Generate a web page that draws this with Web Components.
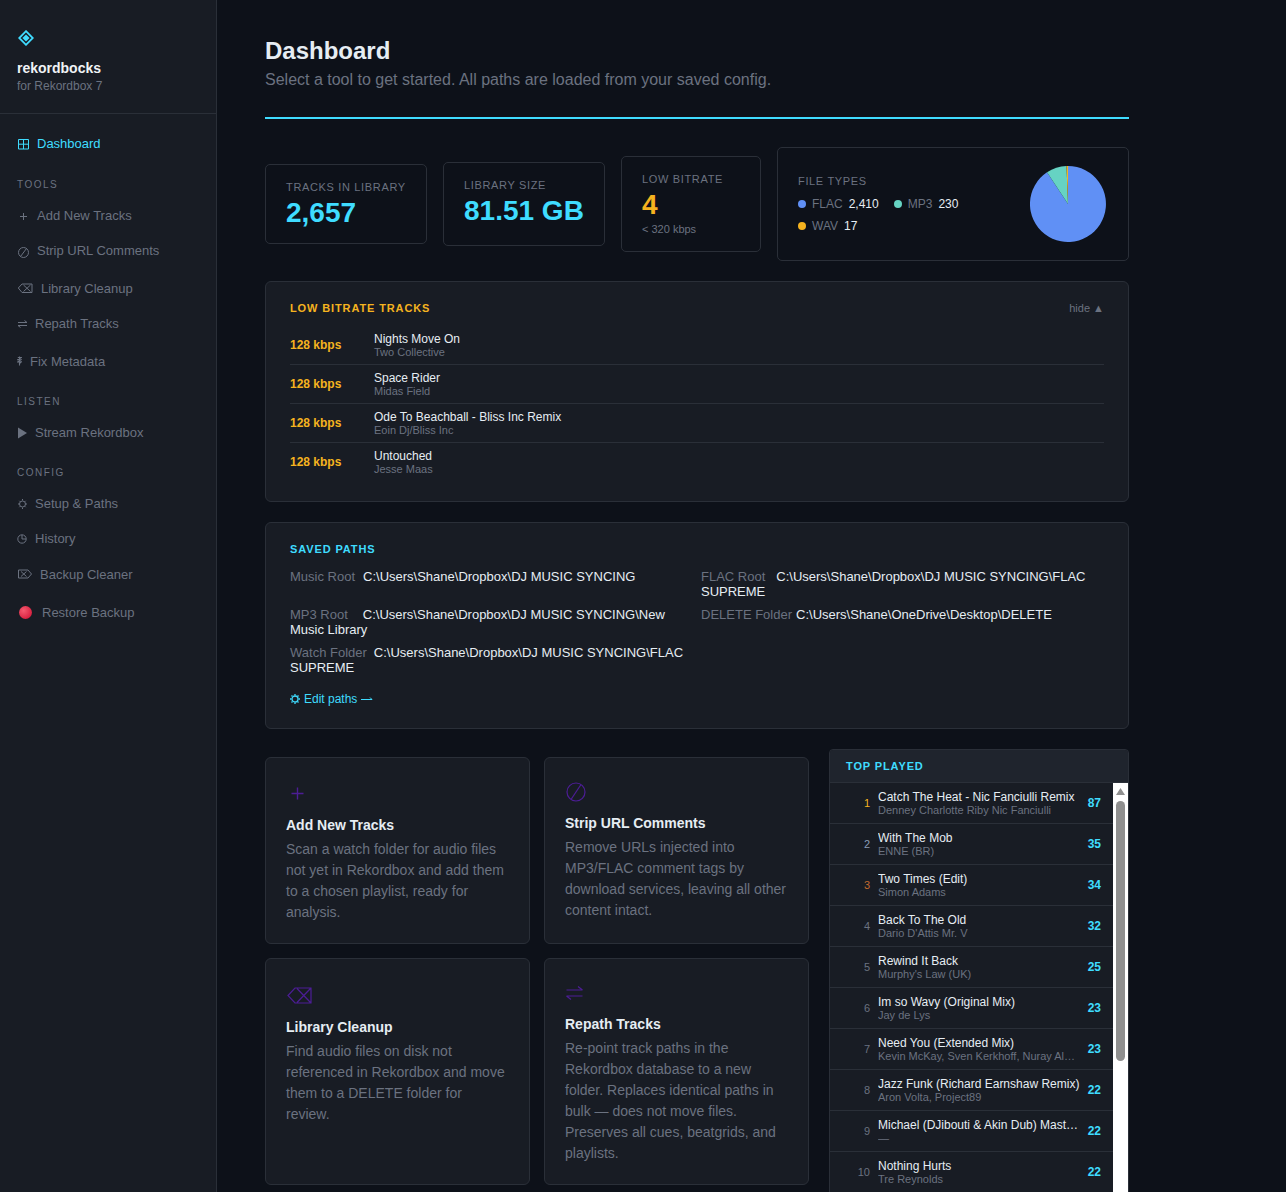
<!DOCTYPE html>
<html>
<head>
<meta charset="utf-8">
<title>rekordbocks</title>
<style>
    html, body { margin: 0; padding: 0; height: 100%; overflow: hidden; background: #0d1119; }
    body { font-family: "Liberation Sans", Arial, sans-serif; color: #e6edf3; }
    svg { display: block; flex: none; }
</style>
</head>
<body>
<rb-app>
    <rb-sidebar slot="sidebar">
        <rb-nav-item active h="35">
            <svg slot="icon" width="12" height="12" viewBox="0 0 12 12" fill="none" stroke="#3fdcff"><path d="M1.5 1.5h10v9.5h-10zM6.5 1.5v9.5M1.5 6.2h10"/></svg>
            Dashboard
        </rb-nav-item>
        <rb-nav-heading top="17">Tools</rb-nav-heading>
        <rb-nav-item h="35">
            <svg slot="icon" width="12" height="12" viewBox="0 0 12 12" fill="none" stroke="#6b7280"><path d="M6.5 3v7M3 6.5h7"/></svg>
            Add New Tracks
        </rb-nav-item>
        <rb-nav-item h="35">
            <svg slot="icon" width="12" height="12" viewBox="0 0 12 12" fill="none" stroke="#6b7280" style="margin-top:2px"><circle cx="6.5" cy="6.5" r="5"/><path d="M3.5 10.5l6-8"/></svg>
            Strip URL Comments
        </rb-nav-item>
        <rb-nav-item h="38" shift>
            <svg slot="icon" width="16" height="10" viewBox="0 0 16 10" fill="none" stroke="#6b7280"><path d="M1.3 5L5 1h10v8.5H5zM6.5 2l7 6.5M13.5 2l-7 6.5"/></svg>
            Library Cleanup
        </rb-nav-item>
        <rb-nav-item h="35">
            <svg slot="icon" width="10" height="10" viewBox="0 0 10 10" fill="none" stroke="#6b7280"><path d="M1 3.5h9M7.5 1.5l2.500 2M10 6.500H1M3.500 8.500l-2.500-2"/></svg>
            Repath Tracks
        </rb-nav-item>
        <rb-nav-item h="38" shift>
            <svg slot="icon" width="5" height="10" viewBox="0 0 5 10" fill="none" stroke="#6b7280" stroke-width="1.100"><path d="M2.500 .5v9M.8 1.500h3.400l-3.400 2.200h3.400l-3.400 2.200h3.400l-2 2"/></svg>
            Fix Metadata
        </rb-nav-item>
        <rb-nav-heading top="16">Listen</rb-nav-heading>
        <rb-nav-item h="35">
            <svg slot="icon" width="10" height="12" viewBox="0 0 10 12" fill="#6b7280"><path d="M1 .500L10 6 1 11.500z"/></svg>
            Stream Rekordbox
        </rb-nav-item>
        <rb-nav-heading top="16">Config</rb-nav-heading>
        <rb-nav-item h="35">
            <svg slot="icon" width="10" height="10" viewBox="0 0 10 10" fill="none" stroke="#6b7280"><circle cx="5.500" cy="5" r="3"/><path d="M5.500 0v1.500M5.500 8.500V10M1 5H2.200M8.800 5H10M2.300 1.800l1 1M7.700 7.200l1 1M8.700 1.800l-1 1M3.300 7.200l-1 1"/></svg>
            Setup &amp; Paths
        </rb-nav-item>
        <rb-nav-item h="35">
            <svg slot="icon" width="10" height="10" viewBox="0 0 10 10" fill="none" stroke="#6b7280"><circle cx="5" cy="5" r="4.200"/><path d="M5 1v4h4"/></svg>
            History
        </rb-nav-item>
        <rb-nav-item h="36">
            <svg slot="icon" width="15" height="10" viewBox="0 0 15 10" fill="none" stroke="#6b7280"><path d="M1.500 1H11l3.500 4-3.500 4H1.500zM4 2.500l5.500 5M9.500 2.500L4 7.500"/></svg>
            Backup Cleaner
        </rb-nav-item>
        <rb-nav-item h="40">
            <span slot="icon" style="display:block;width:13px;height:13px;margin:0 2px;border-radius:50%;background:radial-gradient(circle at 35% 35%,#f4596f,#d92342 70%,#b81a36)"></span>
            Restore Backup
        </rb-nav-item>
    </rb-sidebar>

    <rb-page-head>
        <span slot="title">Dashboard</span>
        Select a tool to get started. All paths are loaded from your saved config.
    </rb-page-head>

    <rb-stats>
        <rb-stat-card pad="14">
            <span slot="label">Tracks in Library</span>
            <span slot="value">2,657</span>
        </rb-stat-card>
        <rb-stat-card pad="18">
            <span slot="label">Library Size</span>
            <span slot="value">81.51 GB</span>
        </rb-stat-card>
        <rb-stat-card pad="15" width="140" tone="amber">
            <span slot="label">Low Bitrate</span>
            <span slot="value">4</span>
            <span slot="sub">&lt; 320 kbps</span>
        </rb-stat-card>
        <rb-file-types>
            <rb-legend-item color="#6090f5" value="2,410">FLAC</rb-legend-item>
            <rb-legend-item color="#66d3c3" value="230">MP3</rb-legend-item>
            <rb-legend-item color="#f5b31f" value="17">WAV</rb-legend-item>
        </rb-file-types>
    </rb-stats>

    <rb-panel tone="amber" action="hide ▲" heading="Low Bitrate Tracks">
        <rb-low-row kbps="128 kbps" artist="Two Collective">Nights Move On</rb-low-row>
        <rb-low-row kbps="128 kbps" artist="Midas Field">Space Rider</rb-low-row>
        <rb-low-row kbps="128 kbps" artist="Eoin Dj/Bliss Inc">Ode To Beachball - Bliss Inc Remix</rb-low-row>
        <rb-low-row kbps="128 kbps" artist="Jesse Maas" last>Untouched</rb-low-row>
    </rb-panel>

    <rb-panel tone="cyan" heading="Saved Paths">
        <rb-path-grid>
            <rb-path label="Music Root" gap="8">C:\Users\Shane\Dropbox\DJ MUSIC SYNCING</rb-path>
            <rb-path label="FLAC Root" gap="11">C:\Users\Shane\Dropbox\DJ MUSIC SYNCING\FLAC<br>SUPREME</rb-path>
            <rb-path label="MP3 Root" gap="15">C:\Users\Shane\Dropbox\DJ MUSIC SYNCING\New<br>Music Library</rb-path>
            <rb-path label="DELETE Folder" gap="4">C:\Users\Shane\OneDrive\Desktop\DELETE</rb-path>
            <rb-path label="Watch Folder" gap="7">C:\Users\Shane\Dropbox\DJ MUSIC SYNCING\FLAC<br>SUPREME</rb-path>
        </rb-path-grid>
        <rb-edit-link>Edit paths</rb-edit-link>
    </rb-panel>

    <rb-lower>
        <rb-tool-grid>
            <rb-tool-card icon-height="39">
                <svg slot="icon" width="13" height="13" viewBox="0 0 13 13" fill="none" stroke="#4c1d95" stroke-width="1.400" style="margin:9px 0 0 5px"><path d="M6.500 .500v12M.500 6.500h12"/></svg>
                <span slot="title">Add New Tracks</span>
                Scan a watch folder for audio files not yet in Rekordbox and add them to a chosen playlist, ready for analysis.
            </rb-tool-card>
            <rb-tool-card icon-height="37">
                <svg slot="icon" width="20" height="20" viewBox="0 0 20 20" fill="none" stroke="#4c1d95" stroke-width="1.200" style="margin:4px 0 0 1px"><circle cx="10" cy="10" r="9"/><path d="M5 17.500L15 2.500"/></svg>
                <span slot="title">Strip URL Comments</span>
                Remove URLs injected into MP3/FLAC comment tags by download services, leaving all other content intact.
            </rb-tool-card>
            <rb-tool-card icon-height="40">
                <svg slot="icon" width="25" height="17" viewBox="0 0 25 17" fill="none" stroke="#4c1d95" stroke-width="1.200" style="margin:8px 0 0 1px"><path d="M1 8.500L8 1h16v15H8zM10 1.500l13.500 14M23.500 1.500L10 15.500"/></svg>
                <span slot="title">Library Cleanup</span>
                Find audio files on disk not referenced in Rekordbox and move them to a DELETE folder for review.
            </rb-tool-card>
            <rb-tool-card icon-height="37">
                <svg slot="icon" width="17" height="16" viewBox="0 0 17 16" fill="none" stroke="#4c1d95" stroke-width="1.200" style="margin:6px 0 0 1px"><path d="M.500 5h16M12 1.500l4.500 3.500M16.500 11H.500M5 14.500L.500 11"/></svg>
                <span slot="title">Repath Tracks</span>
                Re-point track paths in the Rekordbox database to a new folder. Replaces identical paths in bulk — does not move files. Preserves all cues, beatgrids, and playlists.
            </rb-tool-card>
        </rb-tool-grid>
        <rb-top-played>
            <rb-top-row rank="1" count="87" tone="#f5b31f"><span slot="title">Catch The Heat - Nic Fanciulli Remix</span><span slot="artist">Denney Charlotte Riby Nic Fanciulli</span></rb-top-row>
            <rb-top-row rank="2" count="35" tone="#8a9bb5"><span slot="title">With The Mob</span><span slot="artist">ENNE (BR)</span></rb-top-row>
            <rb-top-row rank="3" count="34" tone="#c2692e"><span slot="title">Two Times (Edit)</span><span slot="artist">Simon Adams</span></rb-top-row>
            <rb-top-row rank="4" count="32"><span slot="title">Back To The Old</span><span slot="artist">Dario D'Attis Mr. V</span></rb-top-row>
            <rb-top-row rank="5" count="25"><span slot="title">Rewind It Back</span><span slot="artist">Murphy's Law (UK)</span></rb-top-row>
            <rb-top-row rank="6" count="23"><span slot="title">Im so Wavy (Original Mix)</span><span slot="artist">Jay de Lys</span></rb-top-row>
            <rb-top-row rank="7" count="23"><span slot="title">Need You (Extended Mix)</span><span slot="artist">Kevin McKay, Sven Kerkhoff, Nuray Al…</span></rb-top-row>
            <rb-top-row rank="8" count="22"><span slot="title">Jazz Funk (Richard Earnshaw Remix)</span><span slot="artist">Aron Volta, Project89</span></rb-top-row>
            <rb-top-row rank="9" count="22"><span slot="title">Michael (DJibouti &amp; Akin Dub) Mast…</span><span slot="artist">—</span></rb-top-row>
            <rb-top-row rank="10" count="22"><span slot="title">Nothing Hurts</span><span slot="artist">Tre Reynolds</span></rb-top-row>
        </rb-top-played>
    </rb-lower>
</rb-app>

<script>
class RbApp extends HTMLElement {
    constructor() {
        super();
        this.attachShadow({ mode: 'open' });
        this.shadowRoot.innerHTML = `
            <style>
                :host { display: flex; height: 100vh; overflow: hidden; }
                main { flex: 1; min-width: 0; padding: 37px 48px 0; overflow: hidden; }
                .column { max-width: 864px; display: flex; flex-direction: column; gap: 20px; }
            </style>
            <slot name="sidebar"></slot>
            <main><div class="column"><slot></slot></div></main>
        `;
    }
}
customElements.define('rb-app', RbApp);

class RbSidebar extends HTMLElement {
    constructor() {
        super();
        this.attachShadow({ mode: 'open' });
        this.shadowRoot.innerHTML = `
            <style>
                :host { display: block; flex: none; width: 216px; background: #181c24; border-right: 1px solid #2a2f38; }
                header { height: 83px; padding: 30px 17px 0; border-bottom: 1px solid #2a2f38; }
                svg { display: block; margin-left: 1px; }
                .name { margin-top: 14px; font-size: 14px; line-height: 16px; font-weight: bold; color: #f0f3f6; }
                .sub { margin-top: 3px; font-size: 12px; line-height: 14px; color: #6b7280; }
                nav { padding: 12px 0 0 17px; display: flex; flex-direction: column; }
            </style>
            <header>
                <svg width="16" height="16" viewBox="0 0 16 16">
                    <path d="M8 1.200L14.800 8 8 14.800 1.200 8z" fill="none" stroke="#3fdcff" stroke-width="1.800"/>
                    <path d="M8 4.400L11.600 8 8 11.600 4.400 8z" fill="#3fdcff"/>
                </svg>
                <div class="name">rekordbocks</div>
                <div class="sub">for Rekordbox 7</div>
            </header>
            <nav><slot></slot></nav>
        `;
    }
}
customElements.define('rb-sidebar', RbSidebar);

class RbNavItem extends HTMLElement {
    constructor() {
        super();
        this.attachShadow({ mode: 'open' });
        this.shadowRoot.innerHTML = `
            <style>
                :host { display: flex; align-items: center; gap: 8px; box-sizing: border-box; font-size: 13px; color: #6b7280; }
                :host([active]) { color: #3fdcff; }
                :host([shift]) { padding-top: 2px; }
            </style>
            <slot name="icon"></slot>
            <span><slot></slot></span>
        `;
    }
    connectedCallback() {
        this.style.height = this.getAttribute('h') + 'px';
    }
}
customElements.define('rb-nav-item', RbNavItem);

class RbNavHeading extends HTMLElement {
    constructor() {
        super();
        this.attachShadow({ mode: 'open' });
        this.shadowRoot.innerHTML = `
            <style>
                :host { display: block; font-size: 10px; line-height: 14px; letter-spacing: 1.5px; text-transform: uppercase; color: #6b7280; margin-bottom: 6px; }
            </style>
            <slot></slot>
        `;
    }
    connectedCallback() {
        this.style.marginTop = this.getAttribute('top') + 'px';
    }
}
customElements.define('rb-nav-heading', RbNavHeading);

class RbPageHead extends HTMLElement {
    constructor() {
        super();
        this.attachShadow({ mode: 'open' });
        this.shadowRoot.innerHTML = `
            <style>
                :host { display: block; padding-bottom: 28px; border-bottom: 2px solid #3fdcff; margin-bottom: 8px; }
                h1 { margin: 0; font-size: 24px; line-height: 28px; font-weight: bold; color: #e6edf3; }
                p { margin: 6px 0 0; font-size: 16px; line-height: 18px; color: #6b7280; }
            </style>
            <h1><slot name="title"></slot></h1>
            <p><slot></slot></p>
        `;
    }
}
customElements.define('rb-page-head', RbPageHead);

class RbStats extends HTMLElement {
    constructor() {
        super();
        this.attachShadow({ mode: 'open' });
        this.shadowRoot.innerHTML = `
            <style>
                :host { display: flex; align-items: center; gap: 16px; }
            </style>
            <slot></slot>
        `;
    }
}
customElements.define('rb-stats', RbStats);

class RbStatCard extends HTMLElement {
    constructor() {
        super();
        this.attachShadow({ mode: 'open' });
        this.shadowRoot.innerHTML = `
            <style>
                :host { display: block; box-sizing: border-box; width: 162px; padding: 16px 20px; border: 1px solid #2a2f38; border-radius: 5px; }
                .label { font-size: 11px; line-height: 13px; letter-spacing: .66px; text-transform: uppercase; color: #6b7280; white-space: nowrap; }
                .value { margin-top: 3px; font-size: 28px; line-height: 32px; font-weight: bold; color: #3fdcff; }
                :host([tone=amber]) .value { color: #f5b31f; }
                .sub { font-size: 11px; line-height: 13px; color: #6b7280; margin-top: 2px; }
            </style>
            <div class="label"><slot name="label"></slot></div>
            <div class="value"><slot name="value"></slot></div>
            <div class="sub" hidden><slot name="sub"></slot></div>
        `;
    }
    connectedCallback() {
        if (this.getAttribute('width')) {
            this.style.width = this.getAttribute('width') + 'px';
        }
        this.style.paddingBottom = this.getAttribute('pad') + 'px';
        if (this.querySelector('[slot=sub]')) {
            this.shadowRoot.querySelector('.sub').hidden = false;
        }
    }
}
customElements.define('rb-stat-card', RbStatCard);

class RbFileTypes extends HTMLElement {
    constructor() {
        super();
        this.attachShadow({ mode: 'open' });
        this.shadowRoot.innerHTML = `
            <style>
                :host { flex: 1; display: flex; align-items: center; justify-content: space-between; padding: 18px 22px 18px 20px; border: 1px solid #2a2f38; border-radius: 5px; }
                .label { font-size: 11px; line-height: 13px; letter-spacing: .66px; text-transform: uppercase; color: #6b7280; margin-bottom: 9px; }
                .legend { display: flex; flex-wrap: wrap; gap: 8px 15px; width: 200px; }
                svg { display: block; }
            </style>
            <div>
                <div class="label">File Types</div>
                <div class="legend"><slot></slot></div>
            </div>
            <svg width="76" height="76" viewBox="0 0 76 76">
                <path d="M38 38L38 0A38 38 0 1 1 17 6.300z" fill="#6090f5"/>
                <path d="M38 38L17 6.300A38 38 0 0 1 36.500 .030z" fill="#66d3c3"/>
                <path d="M38 38L36.500 .030A38 38 0 0 1 38 0z" fill="#f5b31f"/>
            </svg>
        `;
    }
}
customElements.define('rb-file-types', RbFileTypes);

class RbLegendItem extends HTMLElement {
    constructor() {
        super();
        this.attachShadow({ mode: 'open' });
        this.shadowRoot.innerHTML = `
            <style>
                :host { display: flex; align-items: center; font-size: 12px; line-height: 14px; color: #6b7280; }
                i { width: 8px; height: 8px; border-radius: 50%; margin-right: 6px; }
                b { font-weight: normal; color: #e6edf3; margin-left: 6px; }
            </style>
            <i></i><slot></slot><b></b>
        `;
    }
    connectedCallback() {
        this.shadowRoot.querySelector('i').style.background = this.getAttribute('color');
        this.shadowRoot.querySelector('b').textContent = this.getAttribute('value');
    }
}
customElements.define('rb-legend-item', RbLegendItem);

class RbPanel extends HTMLElement {
    constructor() {
        super();
        this.attachShadow({ mode: 'open' });
        this.shadowRoot.innerHTML = `
            <style>
                :host { display: block; padding: 20px 24px; background: #181c24; border: 1px solid #2a2f38; border-radius: 6px; }
                .top { display: flex; justify-content: space-between; align-items: center; }
                h2 { margin: 0; font-size: 11px; line-height: 12px; font-weight: bold; letter-spacing: .88px; text-transform: uppercase; color: #3fdcff; }
                :host([tone=amber]) h2 { color: #f5b31f; }
                .action { font-size: 11px; color: #6b7280; }
                .body { margin-top: 12px; }
                :host([tone=cyan]) .body { margin-top: 14px; }
            </style>
            <div class="top"><h2></h2><span class="action"></span></div>
            <div class="body"><slot></slot></div>
        `;
    }
    connectedCallback() {
        this.shadowRoot.querySelector('h2').textContent = this.getAttribute('heading');
        this.shadowRoot.querySelector('.action').textContent = this.getAttribute('action') || '';
    }
}
customElements.define('rb-panel', RbPanel);

class RbLowRow extends HTMLElement {
    constructor() {
        super();
        this.attachShadow({ mode: 'open' });
        this.shadowRoot.innerHTML = `
            <style>
                :host { display: flex; align-items: center; padding: 6px 0; border-bottom: 1px solid #2a2f38; }
                :host([last]) { border-bottom: 0; }
                .kbps { width: 84px; font-size: 12px; font-weight: bold; color: #f5b31f; }
                .title { font-size: 12px; line-height: 14px; color: #e6edf3; }
                .artist { font-size: 11px; line-height: 12px; color: #6b7280; }
            </style>
            <div class="kbps"></div>
            <div>
                <div class="title"><slot></slot></div>
                <div class="artist"></div>
            </div>
        `;
    }
    connectedCallback() {
        this.shadowRoot.querySelector('.kbps').textContent = this.getAttribute('kbps');
        this.shadowRoot.querySelector('.artist').textContent = this.getAttribute('artist');
    }
}
customElements.define('rb-low-row', RbLowRow);

class RbPathGrid extends HTMLElement {
    constructor() {
        super();
        this.attachShadow({ mode: 'open' });
        this.shadowRoot.innerHTML = `
            <style>
                :host { display: grid; grid-template-columns: 403px 403px; gap: 8px; }
            </style>
            <slot></slot>
        `;
    }
}
customElements.define('rb-path-grid', RbPathGrid);

class RbPath extends HTMLElement {
    constructor() {
        super();
        this.attachShadow({ mode: 'open' });
        this.shadowRoot.innerHTML = `
            <style>
                :host { display: block; font-size: 13px; line-height: 15px; color: #e6edf3; }
                span { color: #6b7280; }
            </style>
            <span></span><slot></slot>
        `;
    }
    connectedCallback() {
        const label = this.shadowRoot.querySelector('span');
        label.textContent = this.getAttribute('label');
        label.style.marginRight = this.getAttribute('gap') + 'px';
    }
}
customElements.define('rb-path', RbPath);

class RbEditLink extends HTMLElement {
    constructor() {
        super();
        this.attachShadow({ mode: 'open' });
        this.shadowRoot.innerHTML = `
            <style>
                :host { display: flex; align-items: center; gap: 4px; margin: 17px 0 2px; font-size: 12px; line-height: 14px; color: #3fdcff; }
            </style>
            <svg width="10" height="10" viewBox="0 0 10 10" fill="none" stroke="#3fdcff" stroke-width="1.300"><circle cx="5" cy="5" r="3"/><path d="M5 0v1.500M5 8.500V10M0 5h1.500M8.500 5H10M1.500 1.500l1 1M7.500 7.500l1 1M8.500 1.500l-1 1M2.500 7.500l-1 1"/></svg>
            <span><slot></slot></span>
            <svg width="12" height="6" viewBox="0 0 12 6" fill="none" stroke="#3fdcff"><path d="M0 3.500h11M9 1.500l2 2"/></svg>
        `;
    }
}
customElements.define('rb-edit-link', RbEditLink);

class RbLower extends HTMLElement {
    constructor() {
        super();
        this.attachShadow({ mode: 'open' });
        this.shadowRoot.innerHTML = `
            <style>
                :host { display: grid; grid-template-columns: 544px 300px; gap: 20px; align-items: start; }
            </style>
            <slot></slot>
        `;
    }
}
customElements.define('rb-lower', RbLower);

class RbToolGrid extends HTMLElement {
    constructor() {
        super();
        this.attachShadow({ mode: 'open' });
        this.shadowRoot.innerHTML = `
            <style>
                :host { display: grid; grid-template-columns: 1fr 1fr; gap: 14px; margin-top: 8px; }
            </style>
            <slot></slot>
        `;
    }
}
customElements.define('rb-tool-grid', RbToolGrid);

class RbToolCard extends HTMLElement {
    constructor() {
        super();
        this.attachShadow({ mode: 'open' });
        this.shadowRoot.innerHTML = `
            <style>
                :host { display: block; padding: 20px; background: #181c24; border: 1px solid #2a2f38; border-radius: 6px; }
                .icon { display: flow-root; }
                .title { font-size: 14px; line-height: 16px; font-weight: bold; color: #e6edf3; margin-bottom: 6px; }
                .desc { font-size: 14px; line-height: 21px; color: #6b7280; }
            </style>
            <div class="icon"><slot name="icon"></slot></div>
            <div class="title"><slot name="title"></slot></div>
            <div class="desc"><slot></slot></div>
        `;
    }
    connectedCallback() {
        this.shadowRoot.querySelector('.icon').style.height = this.getAttribute('icon-height') + 'px';
    }
}
customElements.define('rb-tool-card', RbToolCard);

class RbTopPlayed extends HTMLElement {
    constructor() {
        super();
        this.attachShadow({ mode: 'open' });
        this.shadowRoot.innerHTML = `
            <style>
                :host { display: block; background: #181c24; border: 1px solid #2a2f38; border-radius: 4px; overflow: hidden; }
                h2 { margin: 0; padding: 10px 16px; font-size: 11px; line-height: 12px; font-weight: bold; letter-spacing: .88px; text-transform: uppercase; color: #3fdcff; background: #1f242d; border-bottom: 1px solid #2a2f38; }
                .list { display: flex; height: 480px; overflow: hidden; }
                .rows { flex: 1; min-width: 0; }
                /* headless chrome hides real scrollbars, so this one is drawn */
                .bar { flex: none; width: 15px; padding-top: 5px; box-sizing: border-box; background: #fff; }
                .bar svg { display: block; margin-left: 3px; }
                .thumb { width: 9px; height: 260px; margin: 6px 0 0 3px; border-radius: 4.500px; background: #8f8f8f; }
            </style>
            <h2>Top Played</h2>
            <div class="list">
                <div class="rows"><slot></slot></div>
                <div class="bar">
                    <svg width="9" height="7" viewBox="0 0 9 7" fill="#8f8f8f"><path d="M4.500 0L9 7H0z"/></svg>
                    <div class="thumb"></div>
                </div>
            </div>
        `;
    }
}
customElements.define('rb-top-played', RbTopPlayed);

class RbTopRow extends HTMLElement {
    constructor() {
        super();
        this.attachShadow({ mode: 'open' });
        this.shadowRoot.innerHTML = `
            <style>
                :host { display: flex; align-items: center; gap: 8px; padding: 7px 12px 7px 0; border-bottom: 1px solid #2a2f38; }
                .rank { flex: none; width: 40px; text-align: right; font-size: 11px; color: #6b7280; }
                .text { flex: 1; min-width: 0; }
                .title, .artist { white-space: nowrap; overflow: hidden; text-overflow: ellipsis; }
                .title { font-size: 12px; line-height: 14px; color: #e6edf3; }
                .artist { font-size: 11px; line-height: 12px; color: #6b7280; }
                .count { flex: none; font-size: 12px; font-weight: bold; color: #3fdcff; }
            </style>
            <div class="rank"></div>
            <div class="text">
                <div class="title"><slot name="title"></slot></div>
                <div class="artist"><slot name="artist"></slot></div>
            </div>
            <div class="count"></div>
        `;
    }
    connectedCallback() {
        const rank = this.shadowRoot.querySelector('.rank');
        rank.textContent = this.getAttribute('rank');
        if (this.getAttribute('tone')) {
            rank.style.color = this.getAttribute('tone');
        }
        this.shadowRoot.querySelector('.count').textContent = this.getAttribute('count');
    }
}
customElements.define('rb-top-row', RbTopRow);
</script>
</body>
</html>
